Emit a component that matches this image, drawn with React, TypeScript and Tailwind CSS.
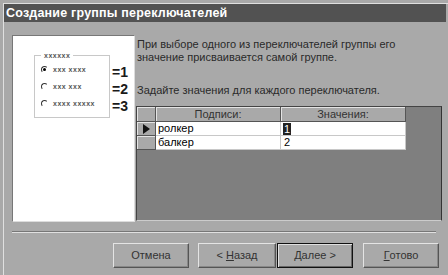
import React from 'react';

const font = "font-['Liberation_Sans',Arial,sans-serif]";

const Radio: React.FC<{ checked?: boolean; label: string }> = ({ checked, label }) => (
  <div className="flex items-center h-[17px]">
    <span className="relative w-[7px] h-[7px] rounded-full border border-t-[#333] border-l-[#333] border-r-transparent border-b-transparent flex items-center justify-center">
      {checked && <span className="w-[3px] h-[3px] rounded-full bg-black" />}
    </span>
    <span className="ml-[5px] text-[7px] leading-none font-bold tracking-[0.5px] text-[#555]">{label}</span>
  </div>
);

const Button: React.FC<{ children: React.ReactNode; w: string; def?: boolean }> = ({ children, w, def }) => (
  <button
    className={`${w} h-[25px] bg-[#a9a9a9] text-[11px] text-[#333] flex items-center justify-center border ${
      def
        ? 'border-[#111] shadow-[inset_1px_1px_0_#e0e0e0,inset_-1px_-1px_0_#666]'
        : 'border-t-[#e4e4e4] border-l-[#e4e4e4] border-r-[#555] border-b-[#555] shadow-[inset_-1px_-1px_0_#888]'
    }`}
  >
    {children}
  </button>
);

export default function App() {
  return (
    <div className={`w-[448px] h-[275px] bg-[#a9a9a9] ${font} overflow-hidden flex flex-col pl-[3px] pt-[3px]`}>
      <div className="flex flex-col flex-1 border-l border-t border-[#e0e0e0]">
        {/* title bar */}
        <div className="h-[18px] mr-[2px] bg-[#525252] flex items-center pl-[2px]">
          <span className="text-white font-bold text-[12.5px] tracking-[0.2px]">Создание группы переключателей</span>
        </div>

        <div className="flex mt-[13px] ml-[8px]">
          {/* picture panel */}
          <div className="w-[123px] h-[187px] bg-white border border-t-[#777] border-l-[#777] border-r-[#ddd] border-b-[#ddd] pl-[21px] pt-[16px] flex items-start">
            <fieldset className="w-[76px] h-[66px] border border-[#c8c8c8] pl-[6px] pr-0 pt-[2px] m-0">
              <legend className="px-[3px] text-[7px] font-bold tracking-[0.5px] text-[#555] leading-none">xxxxxx</legend>
              <Radio checked label="xxx xxxx" />
              <Radio label="xxx xxx" />
              <Radio label="xxxx xxxxx" />
            </fieldset>
            <div className="ml-[2px] mt-[12px] flex flex-col text-[14px] font-bold text-[#1a1a1a] leading-[17px]">
              <span>=1</span>
              <span>=2</span>
              <span>=3</span>
            </div>
          </div>

          {/* right side */}
          <div className="w-[306px] flex flex-col ml-[1px]">
            <div className="pl-[1px] pt-[3px] text-[11px] leading-[13px] text-[#2a2a2a]">
              <p>При выборе одного из переключателей группы его</p>
              <p>значение присваивается самой группе.</p>
              <p className="mt-[20px]">Задайте значения для каждого переключателя.</p>
            </div>
            <div className="mt-[9px] h-[115px] bg-[#7f7f7f] border border-t-[#444] border-l-[#444] border-r-[#333] border-b-[#ccc]">
              <div className="grid grid-cols-[19px_125px_125px] text-[11px] leading-none">
                <div className="h-[15px] bg-[#a9a9a9] border-r border-b border-[#555] shadow-[inset_1px_1px_0_#e4e4e4]" />
                <div className="h-[15px] bg-[#a9a9a9] border-r border-b border-[#555] shadow-[inset_1px_1px_0_#e4e4e4] flex items-center justify-center text-[#333]">Подписи:</div>
                <div className="h-[15px] bg-[#a9a9a9] border-r border-b border-[#555] shadow-[inset_1px_1px_0_#e4e4e4] flex items-center justify-center text-[#333]">Значения:</div>

                <div className="h-[14px] bg-[#a9a9a9] border-r border-b border-[#555] shadow-[inset_1px_1px_0_#e4e4e4] flex items-center justify-center">
                  <svg width="7" height="10" viewBox="0 0 7 10"><path d="M0 0L7 5L0 10Z" fill="#111" /></svg>
                </div>
                <div className="h-[14px] bg-white border-r border-b border-[#c8c8c8] flex items-center pl-[2px] text-black">ролкер</div>
                <div className="h-[14px] bg-white border-r border-b border-[#c8c8c8] flex items-center pl-[2px] text-black">
                  <span className="bg-[#222] text-white px-[1px] leading-[12px]">1</span>
                </div>

                <div className="h-[14px] bg-[#a9a9a9] border-r border-b border-[#555] shadow-[inset_1px_1px_0_#e4e4e4]" />
                <div className="h-[14px] bg-white border-r border-b border-[#c8c8c8] flex items-center pl-[2px] text-black">балкер</div>
                <div className="h-[14px] bg-white border-r border-b border-[#c8c8c8] flex items-center pl-[3px] text-black">2</div>
              </div>
            </div>
          </div>
        </div>

        {/* separator */}
        <div className="mt-[9px] ml-[8px] w-[424px] h-[2px] border-t border-b border-t-[#777] border-b-[#e0e0e0]" />

        {/* buttons */}
        <div className="flex mt-[10px] ml-[109px]">
          <Button w="w-[76px]">Отмена</Button>
          <div className="w-[9px]" />
          <Button w="w-[78px]">&lt; <span className="underline ml-[3px]">Н</span>азад</Button>
          <div className="w-[1px]" />
          <Button w="w-[76px]" def><span className="underline">Д</span>алее &gt;</Button>
          <div className="w-[10px]" />
          <Button w="w-[76px]"><span className="underline">Г</span>отово</Button>
        </div>
      </div>
    </div>
  );
}
